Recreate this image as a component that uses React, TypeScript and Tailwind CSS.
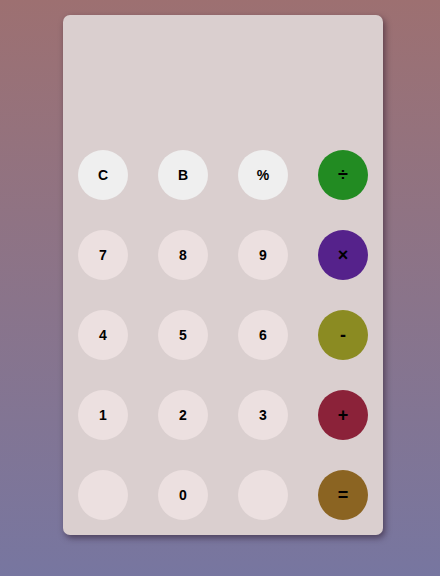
import React from "react";

type Btn = { label: string; cls: string };

const light = "bg-[#efefef] text-[14px]";
const digit = "bg-[#ece0e0] text-[14px]";

const rows: Btn[][] = [
  [
    { label: "C", cls: light },
    { label: "B", cls: light },
    { label: "%", cls: light },
    { label: "÷", cls: "bg-[#228b22] text-[18px]" },
  ],
  [
    { label: "7", cls: digit },
    { label: "8", cls: digit },
    { label: "9", cls: digit },
    { label: "×", cls: "bg-[#55228b] text-[18px]" },
  ],
  [
    { label: "4", cls: digit },
    { label: "5", cls: digit },
    { label: "6", cls: digit },
    { label: "-", cls: "bg-[#8b8b22] text-[18px]" },
  ],
  [
    { label: "1", cls: digit },
    { label: "2", cls: digit },
    { label: "3", cls: digit },
    { label: "+", cls: "bg-[#8b2239] text-[18px]" },
  ],
  [
    { label: "", cls: digit },
    { label: "0", cls: digit },
    { label: "", cls: digit },
    { label: "=", cls: "bg-[#8b6422] text-[18px]" },
  ],
];

export default function App() {
  return (
    <div
      className="w-[440px] h-[576px] bg-gradient-to-b from-[#9d7071] to-[#7776a0] pt-[15px] pl-[63px]"
      style={{ fontFamily: '"Liberation Sans", Arial, sans-serif' }}
    >
      <div className="w-[320px] h-[520px] rounded-[7px] bg-[#dacfcf] shadow-[2px_3px_6px_rgba(40,20,40,0.55)] flex flex-col">
        <div className="h-[120px] shrink-0" />
        <div className="grid grid-cols-4">
          {rows.flat().map((b, i) => (
            <div key={i} className="h-[80px] flex items-center justify-center">
              <div
                className={`w-[50px] h-[50px] rounded-full flex items-center justify-center font-bold text-black ${b.cls}`}
              >
                {b.label}
              </div>
            </div>
          ))}
        </div>
      </div>
    </div>
  );
}
